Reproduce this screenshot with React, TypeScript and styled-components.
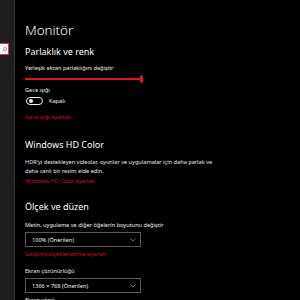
import styled, { createGlobalStyle } from "styled-components";

const GlobalStyle = createGlobalStyle`
  html, body {
    margin: 0;
    padding: 0;
    background: #000;
  }
  body {
    font-family: "Noto Sans", "Open Sans", sans-serif;
    color: #fff;
  }
`;

const accent = "#e81123";
const linkRed = "#d0102a";

const Window = styled.div`
  display: flex;
  width: 300px;
  height: 300px;
  overflow: hidden;
  background: #000;
`;

const Sidebar = styled.div`
  width: 15px;
  flex-shrink: 0;
  background: #1e1e1e;
  border-right: 1px solid #343434;
  padding-top: 43px;
  box-sizing: border-box;
`;

const SearchBox = styled.div`
  width: 10px;
  height: 12px;
  margin-left: -1px;
  box-sizing: border-box;
  background: #f4f4f4;
  border: 1px solid #b8404e;
  display: flex;
  align-items: center;
  justify-content: flex-end;
  padding-right: 1px;
`;

const Main = styled.div`
  flex: 1;
  padding: 22px 0 0 10px;
`;

const Title = styled.h1`
  margin: 0;
  font-weight: 300;
  font-size: 13.5px;
  line-height: 16px;
  letter-spacing: -0.1px;
`;

const Heading = styled.h2<{ gap: number }>`
  margin: ${({ gap }) => gap}px 0 0;
  font-weight: 400;
  font-size: 9px;
  line-height: 12px;
`;

const Label = styled.div<{ gap: number }>`
  margin-top: ${({ gap }) => gap}px;
  font-size: 5.6px;
  line-height: 9px;
  color: #f0f0f0;
  white-space: nowrap;
`;

const Description = styled.p`
  margin: 6.5px 0 0;
  width: 200px;
  font-size: 5.6px;
  line-height: 9px;
  color: #e8e8e8;
`;

const Link = styled.div<{ gap: number }>`
  margin-top: ${({ gap }) => gap}px;
  font-size: 5.6px;
  line-height: 9px;
  color: ${linkRed};
  white-space: nowrap;
`;

const Slider = styled.div`
  margin-top: 1px;
  width: 118px;
  height: 10px;
  display: flex;
  align-items: center;
`;

const Track = styled.div`
  flex: 1;
  height: 1.5px;
  background: ${accent};
`;

const Thumb = styled.div`
  width: 3px;
  height: 8px;
  border-radius: 1.5px;
  background: ${accent};
`;

const ToggleRow = styled.div`
  margin-top: 1.5px;
  height: 10px;
  display: flex;
  align-items: center;
  gap: 6px;
  padding-left: 1px;
  font-size: 5.6px;
  color: #f0f0f0;
`;

const Switch = styled.div`
  width: 17px;
  height: 8px;
  box-sizing: border-box;
  border: 1px solid #f0f0f0;
  border-radius: 4px;
  display: flex;
  align-items: center;
  padding-left: 1.5px;
`;

const Knob = styled.div`
  width: 4px;
  height: 4px;
  border-radius: 50%;
  background: #f0f0f0;
`;

const Select = styled.div`
  margin-top: 2.5px;
  width: 116px;
  height: 15px;
  box-sizing: border-box;
  border: 1px solid #5a5a5a;
  display: flex;
  align-items: center;
  justify-content: space-between;
  padding: 0 4px 0 6px;
  font-size: 5.6px;
  color: #f0f0f0;
`;

function SearchIcon() {
  return (
    <svg width="5" height="5" viewBox="0 0 10 10">
      <circle cx="6" cy="4" r="3" fill="none" stroke="#777" strokeWidth="1.3" />
      <line x1="4" y1="6" x2="1" y2="9" stroke="#777" strokeWidth="1.3" />
    </svg>
  );
}

function Chevron() {
  return (
    <svg width="6" height="4" viewBox="0 0 12 8">
      <polyline points="1,1 6,6 11,1" fill="none" stroke="#bbb" strokeWidth="1.2" />
    </svg>
  );
}

export default function App() {
  return (
    <>
      <GlobalStyle />
      <Window>
        <Sidebar>
          <SearchBox>
            <SearchIcon />
          </SearchBox>
        </Sidebar>
        <Main>
          <Title>Monitör</Title>

          <Heading gap={8}>Parlaklık ve renk</Heading>
          <Label gap={6}>Yerleşik ekran parlaklığını değiştir</Label>
          <Slider>
            <Track />
            <Thumb />
          </Slider>
          <Label gap={1.5}>Gece ışığı</Label>
          <ToggleRow>
            <Switch>
              <Knob />
            </Switch>
            Kapalı
          </ToggleRow>
          <Link gap={6.5}>Gece ışığı ayarları</Link>

          <Heading gap={17.5}>Windows HD Color</Heading>
          <Description>
            HDR'yi destekleyen videolar, oyunlar ve uygulamalar için daha parlak ve daha canlı bir resim elde edin.
          </Description>
          <Link gap={1}>Windows HD Color ayarları</Link>

          <Heading gap={15.5}>Ölçek ve düzen</Heading>
          <Label gap={7.5}>Metin, uygulama ve diğer öğelerin boyutunu değiştir</Label>
          <Select>
            100% (Önerilen)
            <Chevron />
          </Select>
          <Link gap={2.5}>Gelişmiş ölçeklendirme ayarları</Link>
          <Label gap={8}>Ekran çözünürlüğü</Label>
          <Select>
            1366 × 768 (Önerilen)
            <Chevron />
          </Select>
          <Label gap={2.5}>Ekran yönü</Label>
        </Main>
      </Window>
    </>
  );
}
